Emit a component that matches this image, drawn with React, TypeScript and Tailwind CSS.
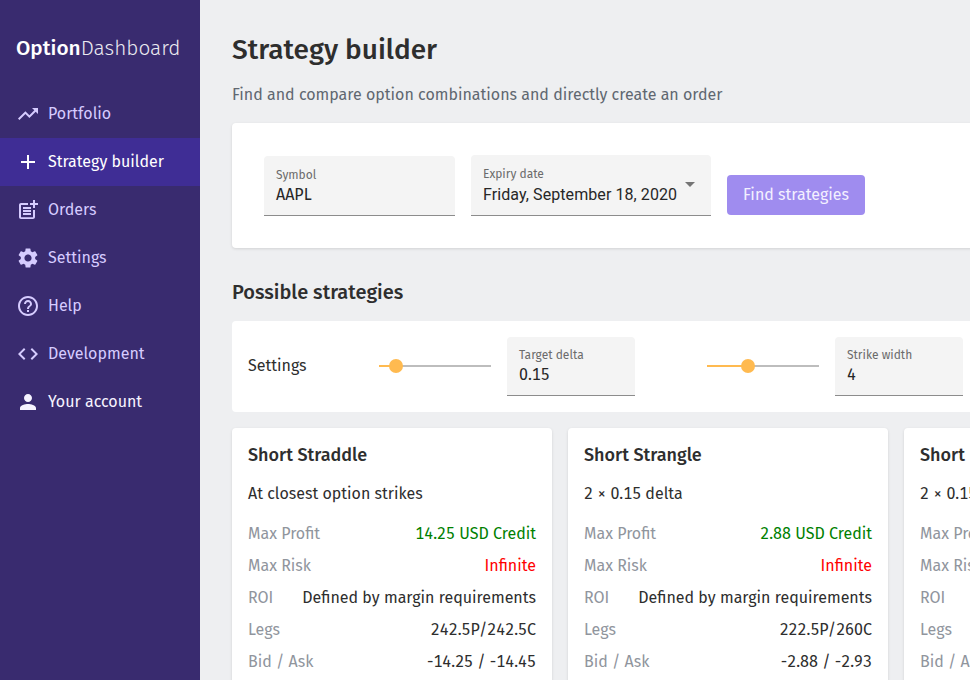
import type { IconType } from 'react-icons'
import {
  MdAdd,
  MdArrowDropDown,
  MdCode,
  MdHelpOutline,
  MdOutlinePostAdd,
  MdPerson,
  MdSettings,
  MdTrendingUp,
} from 'react-icons/md'
import clsx from 'clsx'

interface NavItem {
  label: string
  icon: IconType
  active?: boolean
  bright?: boolean
}

interface Strategy {
  name: string
  description: string
  maxProfit: string
  maxRisk: string
  roi: string
  legs: string
  bidAsk: string
}

const navItems: NavItem[] = [
  { label: 'Portfolio', icon: MdTrendingUp },
  { label: 'Strategy builder', icon: MdAdd, active: true },
  { label: 'Orders', icon: MdOutlinePostAdd },
  { label: 'Settings', icon: MdSettings },
  { label: 'Help', icon: MdHelpOutline },
  { label: 'Development', icon: MdCode },
  { label: 'Your account', icon: MdPerson, bright: true },
]

const strategies: Strategy[] = [
  {
    name: 'Short Straddle',
    description: 'At closest option strikes',
    maxProfit: '14.25 USD Credit',
    maxRisk: 'Infinite',
    roi: 'Defined by margin requirements',
    legs: '242.5P/242.5C',
    bidAsk: '-14.25 / -14.45',
  },
  {
    name: 'Short Strangle',
    description: '2 × 0.15 delta',
    maxProfit: '2.88 USD Credit',
    maxRisk: 'Infinite',
    roi: 'Defined by margin requirements',
    legs: '222.5P/260C',
    bidAsk: '-2.88 / -2.93',
  },
  {
    name: 'Short Iron Condor',
    description: '2 × 0.15 delta',
    maxProfit: '1.42 USD Credit',
    maxRisk: '258 USD',
    roi: '55%',
    legs: '222.5P/260C',
    bidAsk: '-1.42 / -1.48',
  },
]

function Sidebar() {
  return (
    <nav className="w-[200px] shrink-0 bg-[#392b6f]">
      <div className="flex h-[90px] items-center px-4 pt-2 text-[20.8px] leading-6 text-white">
        <span className="font-medium">Option</span>
        <span className="font-light opacity-90">Dashboard</span>
      </div>
      {navItems.map(({ label, icon: Icon, active, bright }) => (
        <a
          key={label}
          className={clsx(
            'flex h-12 items-center gap-2 px-4',
            active ? 'bg-[#3f2d95] text-white' : bright ? 'text-[#f6f3ff]' : 'text-[#d6ccff]',
          )}
        >
          <Icon className="size-6" />
          <span>{label}</span>
        </a>
      ))}
    </nav>
  )
}

function Field({ label, value, className }: { label: string; value: string; className?: string }) {
  return (
    <div className={clsx('rounded-t border-b border-[#8c8c8c] bg-[#f4f4f4] px-3', className)}>
      <div className="text-xs leading-4 text-[#6b6b6b]">{label}</div>
      <div className="leading-6 text-[#272727]">{value}</div>
    </div>
  )
}

function Slider({ percent, className }: { percent: number; className?: string }) {
  return (
    <div className={clsx('relative mb-0.5 h-0.5 w-28 bg-[#bdbdbd]', className)}>
      <div className="h-full bg-[#ffba50]" style={{ width: `${percent}%` }} />
      <div
        className="absolute -top-1.5 -ml-[7px] size-3.5 rounded-full bg-[#ffba50]"
        style={{ left: `${percent}%` }}
      />
    </div>
  )
}

function Row({ label, value, className }: { label: string; value: string; className?: string }) {
  return (
    <div className="flex h-8 items-center justify-between">
      <span className="text-[#90959d]">{label}</span>
      <span className={className}>{value}</span>
    </div>
  )
}

function StrategyCard({ strategy }: { strategy: Strategy }) {
  return (
    <div className="h-80 w-80 shrink-0 rounded bg-white px-4 pt-3 shadow-[0_1px_3px_rgba(0,0,0,0.12)]">
      <h3 className="text-lg leading-[30px] font-medium">{strategy.name}</h3>
      <p className="mt-3 mb-3 leading-6">{strategy.description}</p>
      <Row label="Max Profit" value={strategy.maxProfit} className="text-[#008000]" />
      <Row label="Max Risk" value={strategy.maxRisk} className="text-[#ff0000]" />
      <Row label="ROI" value={strategy.roi} />
      <Row label="Legs" value={strategy.legs} />
      <Row label="Bid / Ask" value={strategy.bidAsk} />
    </div>
  )
}

export default function App() {
  return (
    <div className="flex h-[680px] w-[970px] overflow-hidden bg-[#eeeff1] font-['Fira_Sans','Noto_Sans',sans-serif] text-base text-[#2e2e2e] tabular-nums">
      <Sidebar />
      <main className="min-w-0 flex-1 overflow-hidden pt-8 pl-8 whitespace-nowrap">
        <h1 className="text-[28px] leading-9 font-medium">Strategy builder</h1>
        <p className="mt-[15px] leading-6 text-[#606770]">
          Find and compare option combinations and directly create an order
        </p>

        <section className="mt-4 flex h-[125px] w-[992px] rounded bg-white pt-8 pl-8 shadow-[0_1px_3px_rgba(0,0,0,0.12)]">
          <Field label="Symbol" value="AAPL" className="mt-px mr-4 h-[60px] w-[191px] pt-[11px]" />
          <div className="relative mr-4 h-[61px] w-60 rounded-t border-b border-[#8c8c8c] bg-[#f4f4f4] px-3 pt-[11px]">
            <div className="text-xs leading-4 text-[#6b6b6b]">Expiry date</div>
            <div className="pt-px font-[Roboto,sans-serif] leading-6 tracking-[0.08px] text-[#272727]">
              Friday, September 18, 2020
            </div>
            <MdArrowDropDown className="absolute top-[17px] right-[9px] size-6 text-[#757575]" />
          </div>
          <button className="mt-5 h-10 w-[138px] rounded bg-[#9f8cef] text-[#f3f0ff]">Find strategies</button>
        </section>

        <h2 className="mt-[30px] text-xl leading-7 font-medium">Possible strategies</h2>

        <section className="mt-[15px] flex h-[91px] w-[992px] items-center rounded bg-white pl-4">
          <span className="w-[131px] pb-0.5">Settings</span>
          <Slider percent={15} className="mr-4" />
          <Field label="Target delta" value="0.15" className="mr-[72px] h-[59px] w-32 pt-2.5" />
          <Slider percent={36.6} className="mr-4" />
          <Field label="Strike width" value="4" className="h-[59px] w-32 pt-2.5" />
        </section>

        <div className="mt-4 flex gap-4">
          {strategies.map((strategy) => (
            <StrategyCard key={strategy.name} strategy={strategy} />
          ))}
        </div>
      </main>
    </div>
  )
}
